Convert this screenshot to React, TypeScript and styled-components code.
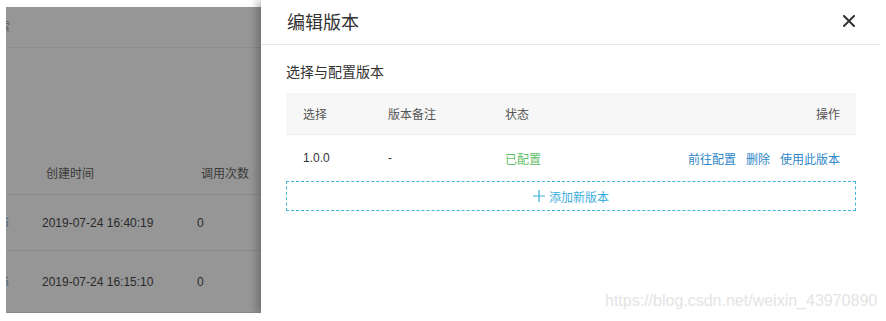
import styled, { createGlobalStyle } from "styled-components";

const GlobalStyle = createGlobalStyle`
  html, body {
    margin: 0;
    padding: 0;
    background: #fff;
  }
  body {
    font-family: "Liberation Sans", "Noto Sans CJK SC", sans-serif;
  }
`;

const Frame = styled.div`
  margin-left: 6px;
  width: 874px;
  height: 313px;
  display: flex;
  align-items: flex-start;
  position: relative;
  overflow: hidden;
`;

/* dimmed page behind the drawer */
const Backdrop = styled.div`
  flex: 0 0 255px;
  height: 306px;
  margin-top: 7px;
  background: #969696;
  overflow: hidden;
  display: flex;
  flex-direction: column;
`;

const TopBar = styled.div`
  height: 40px;
  border-bottom: 1px solid #8c8c8c;
  display: flex;
  align-items: center;
  font-size: 12px;
  color: #5e5e5e;
`;

const Clipped = styled.span`
  margin-left: -8px;
  margin-top: -4px;
`;

const PageTable = styled.div`
  margin-top: 103px;
  display: flex;
  flex-direction: column;
`;

interface RowProps {
  readonly h: number;
}

const PageRow = styled.div<RowProps>`
  height: ${({ h }) => h}px;
  display: grid;
  grid-template-columns: 36px 155px 1fr;
  align-items: center;
  border-bottom: 1px solid #898989;
  font-size: 12px;
  color: #2a2a2a;
`;

interface CellProps {
  readonly head?: boolean;
}

const PageCell = styled.div<CellProps>`
  padding-left: ${({ head }) => (head ? "4px" : "0")};
  color: ${({ head }) => (head ? "#3a3a3a" : "#2a2a2a")};
  white-space: nowrap;
`;

const CutLink = styled.span`
  margin-left: -4px;
  color: #4a6880;
`;

const Drawer = styled.div`
  flex: 1;
  align-self: stretch;
  background: #fff;
  box-shadow: -5px 0 7px rgba(0, 0, 0, 0.22);
  display: flex;
  flex-direction: column;
  z-index: 1;
`;

const DrawerHeader = styled.div`
  height: 44px;
  border-bottom: 1px solid #e8e8e8;
  padding: 0 25px 0 26px;
  display: flex;
  align-items: center;
  justify-content: space-between;
`;

const Title = styled.div`
  font-size: 18px;
  color: #333;
  margin-top: -3px;
`;

const CloseBtn = styled.button`
  border: 0;
  background: none;
  padding: 0;
  width: 12px;
  height: 12px;
  display: flex;
  cursor: pointer;
  margin-top: -2px;
`;

const DrawerBody = styled.div`
  padding: 17px 24px 0 25px;
`;

const SectionTitle = styled.div`
  font-size: 14px;
  line-height: 20px;
  color: #333;
  margin-bottom: 11px;
`;

const VersionTable = styled.div`
  display: flex;
  flex-direction: column;
`;

interface VRowProps {
  readonly head?: boolean;
}

const VRow = styled.div<VRowProps>`
  height: ${({ head }) => (head ? "41px" : "46px")};
  display: grid;
  grid-template-columns: 85px 117px 1fr auto;
  align-items: center;
  padding: 0 16px 0 17px;
  background: ${({ head }) => (head ? "#f7f7f7" : "#fff")};
  border-bottom: ${({ head }) => (head ? "1px solid #ececec" : "0")};
  font-size: 12px;
  color: ${({ head }) => (head ? "#555" : "#333")};
`;

const Status = styled.span`
  color: #5fbf68;
`;

const Actions = styled.div`
  display: flex;
  gap: 10px;
`;

const ActionLink = styled.a`
  color: #2d86c8;
  text-decoration: none;
  cursor: pointer;
`;

const AddButton = styled.button`
  width: 100%;
  height: 30px;
  border: 1px dashed #3fb5de;
  background: #fff;
  color: #3aaedb;
  font-family: inherit;
  font-size: 12px;
  display: flex;
  align-items: center;
  justify-content: center;
  gap: 4px;
  cursor: pointer;
`;

const Watermark = styled.div`
  position: absolute;
  left: 599px;
  top: 292px;
  font-family: "Liberation Sans", sans-serif;
  font-size: 16px;
  color: #e4e4e4;
  pointer-events: none;
  z-index: 2;
`;

const rows = [
  { time: "2019-07-24 16:40:19", count: "0", h: 55 },
  { time: "2019-07-24 16:15:10", count: "0", h: 61 },
];

const App = () => {
  return (
    <>
      <GlobalStyle />
      <Frame>
        <Backdrop>
          <TopBar>
            <Clipped>索</Clipped>
          </TopBar>
          <PageTable>
            <PageRow h={43}>
              <PageCell head></PageCell>
              <PageCell head>创建时间</PageCell>
              <PageCell head>调用次数</PageCell>
            </PageRow>
            {rows.map((r) => (
              <PageRow h={r.h} key={r.time}>
                <PageCell>
                  <CutLink>5</CutLink>
                </PageCell>
                <PageCell>{r.time}</PageCell>
                <PageCell>{r.count}</PageCell>
              </PageRow>
            ))}
          </PageTable>
        </Backdrop>

        <Drawer>
          <DrawerHeader>
            <Title>编辑版本</Title>
            <CloseBtn aria-label="close">
              <svg width="12" height="12" viewBox="0 0 12 12">
                <path
                  d="M1 1 L11 11 M11 1 L1 11"
                  stroke="#333"
                  strokeWidth="2"
                  strokeLinecap="square"
                />
              </svg>
            </CloseBtn>
          </DrawerHeader>
          <DrawerBody>
            <SectionTitle>选择与配置版本</SectionTitle>
            <VersionTable>
              <VRow head>
                <span>选择</span>
                <span>版本备注</span>
                <span>状态</span>
                <span>操作</span>
              </VRow>
              <VRow>
                <span>1.0.0</span>
                <span>-</span>
                <Status>已配置</Status>
                <Actions>
                  <ActionLink>前往配置</ActionLink>
                  <ActionLink>删除</ActionLink>
                  <ActionLink>使用此版本</ActionLink>
                </Actions>
              </VRow>
            </VersionTable>
            <AddButton>
              <svg width="12" height="12" viewBox="0 0 12 12">
                <path d="M6 0 V12 M0 6 H12" stroke="#3aaedb" strokeWidth="1.2" />
              </svg>
              添加新版本
            </AddButton>
          </DrawerBody>
        </Drawer>
        <Watermark>https://blog.csdn.net/weixin_43970890</Watermark>
      </Frame>
    </>
  );
};

export default App;
